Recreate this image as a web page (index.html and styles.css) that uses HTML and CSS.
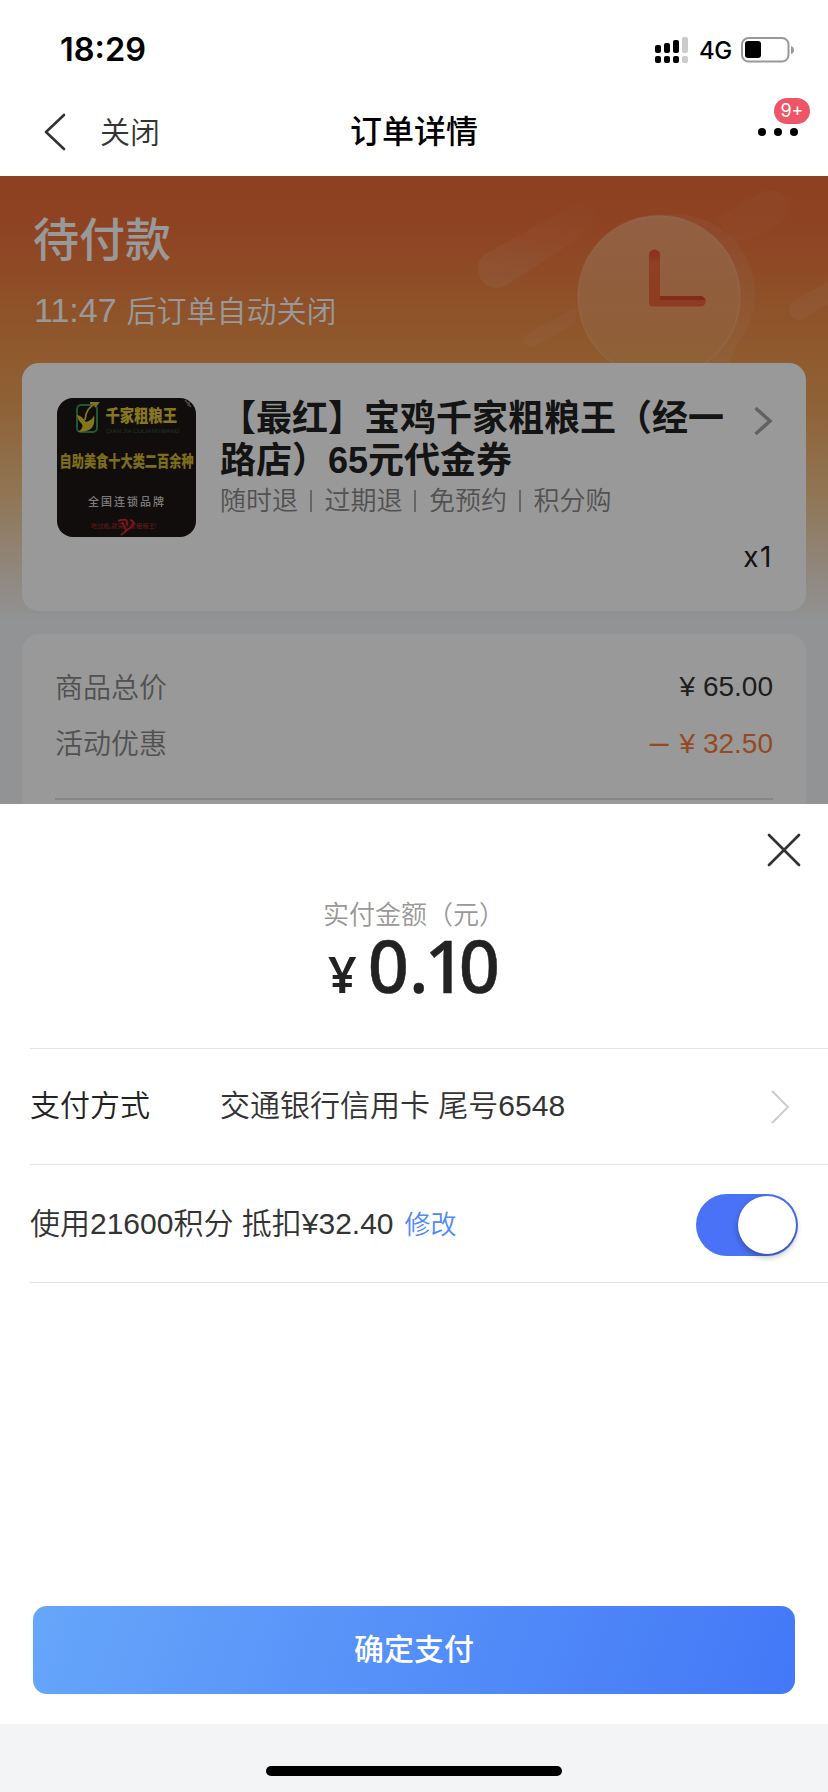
FILE: index.html
```html
<!DOCTYPE html>
<html lang="zh-CN">
<head>
<meta charset="utf-8">
<title>订单详情</title>
<link rel="stylesheet" href="styles.css">
</head>
<body>
<div class="screen">
  <header class="top">
    <div class="status">
      <span class="time">18:29</span>
      <div class="status-icons">
        <svg class="signal" width="34" height="27" viewBox="0 0 34 27">
          <g fill="#000"><rect x="0" y="8" width="6" height="8" rx="2"/><rect x="9" y="6" width="6" height="10" rx="2"/><rect x="18" y="3" width="6" height="13" rx="2"/><rect x="0" y="19" width="6" height="7" rx="2"/><rect x="9" y="19" width="6" height="7" rx="2"/><rect x="18" y="19" width="6" height="7" rx="2"/></g>
          <g fill="#ccc"><rect x="27" y="0" width="6" height="16" rx="2"/><rect x="27" y="19" width="6" height="7" rx="2"/></g>
        </svg>
        <span class="net">4G</span>
        <svg class="battery" width="54" height="26" viewBox="0 0 54 26">
          <rect x="1" y="1" width="46.500" height="23.500" rx="6.500" fill="none" stroke="#999" stroke-width="2"/>
          <rect x="4" y="4" width="16" height="17" rx="3" fill="#000"/>
          <path d="M50 9 Q53 10 53 13 T50 17 Z" fill="#999"/>
        </svg>
      </div>
    </div>
    <nav class="nav">
      <div class="nav-left">
        <svg width="22" height="38" viewBox="0 0 22 38"><path d="M20 2 2 19 20 36" fill="none" stroke="#333" stroke-width="2.600" stroke-linecap="round" stroke-linejoin="round"/></svg>
        <span class="nav-close">关闭</span>
      </div>
      <h1 class="nav-title">订单详情</h1>
      <div class="more">
        <i></i><i></i><i></i>
        <span class="badge">9+</span>
      </div>
    </nav>
  </header>

  <main class="order">
    <svg class="art" width="414" height="187" viewBox="0 0 414 187">
      <defs>
        <linearGradient id="disc" x1="0" y1="0" x2="0" y2="1"><stop offset="0" stop-color="#ffeccb" stop-opacity=".4"/><stop offset="1" stop-color="#ffeccb" stop-opacity=".08"/></linearGradient>
        <linearGradient id="streak" x1="0" y1="1" x2="1" y2="0"><stop offset="0" stop-color="#fff" stop-opacity=".11"/><stop offset="1" stop-color="#fff" stop-opacity="0"/></linearGradient>
        <linearGradient id="hand" x1="0" y1="0" x2="0" y2="1"><stop offset="0" stop-color="#e25030"/><stop offset=".25" stop-color="#ef6a3b"/><stop offset="1" stop-color="#ec6537"/></linearGradient>
      </defs>
      <path d="M71 78 178 19 186 49 91 110A19 19 0 0 1 71 78Z" fill="url(#streak)"/>
      <path d="M113 158 162 131V147L121 170A7 7 0 0 1 113 158Z" fill="#fff" fill-opacity=".06"/>
      <path d="M302 42 348 16A18 18 0 0 1 365 48L323 70Z" fill="#fff" fill-opacity=".035"/>
      <path d="M379 125 414 106V128L391 142A10 10 0 0 1 379 125Z" fill="#fff" fill-opacity=".08"/>
      <path d="M250 39A80 80 0 0 1 322 170L315 187H292A82 82 0 0 0 250 39Z" fill="#fff" fill-opacity=".07"/>
      <circle cx="245" cy="120.500" r="81" fill="url(#disc)" stroke="#ffe9c8" stroke-opacity=".16" stroke-width="2"/>
      <path d="M235 79a5.500 5.500 0 0 1 11 0V120H286.500a5.300 5.300 0 0 1 0 10.600H239a4 4 0 0 1-4-4Z" fill="url(#hand)"/>
      <path d="M246 120H287Q291 121 291 124H246Z" fill="#dc4a2b"/>
    </svg>
    <div class="state">待付款</div>
    <div class="countdown"><span class="clock">11:47</span><span>后订单自动关闭</span></div>

    <section class="card product">
      <svg class="thumb" width="139" height="139" viewBox="0 0 139 139">
        <rect width="139" height="139" fill="#1d1716"/>
        <rect x="20" y="7" width="20" height="27" rx="4" fill="none" stroke="#32945a" stroke-width="2"/>
        <path d="M20 17Q25 18 29 24 36 22 37 17 39 31 29 33 24 34 21 34 27 30 25 26 21 23 20 17Z" fill="#dcc52f"/>
        <path d="M28 22Q29 9 40 5M33 5 41 5 38 9" fill="none" stroke="#dcc52f" stroke-width="1.800"/>
        <text class="t-brand" transform="translate(48.500 24) scale(1 1.200)">千家粗粮王</text>
        <text class="t-latin" x="49" y="35">QIAN JIA CULIANGWANG</text>
        <text class="t-slogan" transform="translate(2.500 69) scale(1 1.350)">自助美食十大类二百余种</text>
        <text class="t-chain" x="31" y="108">全国连锁品牌</text>
        <text class="t-red" x="34" y="130">吃过瘾,就来千家粗粮王!</text>
        <path d="M61 123Q72 119 70 127M65 124 69 132M73 122Q80 124 74 129L64 137" fill="none" stroke="#c72930" stroke-width="2"/>
        <path d="M128 2 134 9M134 0 131 8" stroke="#777" stroke-width="1.500"/>
      </svg>
      <div class="info">
        <div class="head">
          <div class="name">【最红】宝鸡千家粗粮王（经一路店）65元代金券</div>
          <svg class="chev" width="20" height="32" viewBox="0 0 20 32"><path d="M2.500 3 17 16 2.500 29" fill="none" stroke="#a3a3a3" stroke-width="3.500"/></svg>
        </div>
        <div class="tags"><span>随时退</span><span>过期退</span><span>免预约</span><span>积分购</span></div>
        <div class="qty">x1</div>
      </div>
    </section>

    <section class="card prices">
      <div class="line"><span class="lab">商品总价</span><span class="val">¥ 65.00</span></div>
      <div class="line"><span class="lab">活动优惠</span><span class="val off"><b class="minus">–</b>¥ 32.50</span></div>
      <div class="rule"></div>
    </section>
    <div class="dim"></div>
  </main>

  <section class="sheet">
    <svg class="close" width="34" height="34" viewBox="0 0 34 34"><path d="M2 2 32 32M32 2 2 32" stroke="#333" stroke-width="2.700" stroke-linecap="round"/></svg>
    <div class="pay-label">实付金额（元）</div>
    <div class="amount"><span class="yen">¥</span><span class="num">0<span class="dot">.</span><span class="one">1</span>0</span></div>
    <div class="row method">
      <span class="row-label">支付方式</span>
      <span class="row-value">交通银行信用卡 尾号6548</span>
      <svg class="row-chev" width="20" height="36" viewBox="0 0 20 36"><path d="M2 2 18 18 2 34" fill="none" stroke="#ccc" stroke-width="2"/></svg>
    </div>
    <div class="row points">
      <span class="row-points">使用21600积分 抵扣¥32.40</span>
      <span class="edit">修改</span>
      <span class="toggle"><i></i></span>
    </div>
    <button class="pay">确定支付</button>
  </section>
  <footer class="home"><div class="bar"></div></footer>
</div>
</body>
</html>
```
FILE: styles.css
```css
* { box-sizing: border-box; }
body { margin: 0; background: #fff; font-family: "Liberation Sans", "Noto Sans CJK SC", sans-serif; font-weight: 350; color: #333; }
svg { display: block; flex: none; }
i { font-style: normal; }
.screen { width: 828px; height: 1792px; display: flex; flex-direction: column; overflow: hidden; }

.top { height: 176px; flex: none; }
.status { height: 88px; display: flex; justify-content: space-between; align-items: flex-start; padding: 30px 33px 0 60px; }
.time { font: 600 32.5px/40px Inter, sans-serif; color: #000; }
.status-icons { display: flex; align-items: flex-start; padding-top: 7px; }
.net { font: 500 24px/28px Inter, sans-serif; color: #000; width: 33px; margin: 0 9px 0 10px; letter-spacing: -.5px; }
.nav { height: 88px; display: grid; grid-template-columns: 1fr auto 1fr; align-items: center; padding: 0 30px 0 44px; }
.nav-left { display: flex; align-items: center; gap: 34px; }
.nav-close { font-size: 30px; line-height: 40px; padding-top: 2px; }
.nav-title { margin: 0 0 0 -14px; font-size: 32px; line-height: 40px; font-weight: 500; color: #000; }
.more { position: relative; justify-self: end; display: flex; gap: 8px; }
.more i { width: 8px; height: 8px; border-radius: 50%; background: #000; }
.badge { position: absolute; left: 16px; top: -30px; width: 36px; height: 26px; border-radius: 13px; background: #ee5566; color: #fff; font: 18px/26px Inter, sans-serif; text-align: center; }

.order { position: relative; height: 628px; flex: none; overflow: hidden; padding: 36px 22px 0; background: linear-gradient(#ed6c38 0, #ed7039 50px, #ef994f 187px, #efa35d 230px, #f0c58e 320px, #f0dfcd 390px, #f2f5f8 445px); }
.art { position: absolute; right: 0; top: 0; }
.dim { position: absolute; inset: 0; background: rgba(0, 0, 0, .4); }
.state { padding-left: 11px; font-size: 46px; line-height: 56px; font-weight: 500; color: #fff; }
.countdown { height: 60px; margin: 12px 0 23px; padding-left: 12px; display: flex; align-items: baseline; gap: 10px; font-size: 30px; line-height: 60px; color: #fff; }
.clock { font-size: 34px; }
.card { background: #fff; border-radius: 17px; }
.product { height: 248px; padding: 35px 33px 0 35px; display: flex; gap: 24px; }
.thumb { border-radius: 16px; }
.info { flex: 1; }
.head { display: flex; justify-content: space-between; }
.name { width: 506px; font-size: 36px; line-height: 42px; font-weight: 700; color: #222; }
.chev { margin-top: 7px; }
.tags { margin-top: 1px; display: flex; font-size: 26px; line-height: 36px; color: #888; }
.tags span { display: flex; align-items: center; }
.tags span + span::before { content: ""; width: 2px; height: 22px; margin: 0 13px 0 11.500px; background: #aaa; }
.qty { margin-top: 22px; text-align: right; font: 28px/32px Inter, sans-serif; letter-spacing: 1.5px; color: #222; }
.prices { margin-top: 23px; height: 248px; padding: 25px 33px 0; }
.line { height: 56px; display: flex; justify-content: space-between; align-items: center; font-size: 28px; color: #888; }
.lab { padding-bottom: 3px; }
.val { color: #333; white-space: pre; }
.off { color: #f77c37; }
.minus { font-weight: 400; font-size: 34px; line-height: 28px; margin-right: 11px; }
.rule { height: 2px; margin-top: 27px; background: #e0e0e0; }

.sheet { height: 920px; flex: none; background: #fff; display: flex; flex-direction: column; padding-top: 29px; }
.close { align-self: flex-end; margin-right: 27px; }
.pay-label { margin-top: 30px; text-align: center; font-size: 26px; line-height: 36px; color: #999; }
.amount { height: 120px; margin-top: -5px; display: flex; justify-content: center; align-items: baseline; gap: 11px; font-family: "Noto Sans", sans-serif; font-weight: 500; color: #222; line-height: 74px; }
.yen { font-size: 50px; font-weight: 600; }
.num { font-size: 72px; -webkit-text-stroke: .5px #222; }
.dot { letter-spacing: -4px; }
.one { letter-spacing: -7px; }
.row { margin-left: 30px; display: flex; align-items: center; border-top: 1px solid #e3e3e3; font-size: 30px; padding-right: 30px; }
.method { height: 116px; }
.row-label { width: 190px; color: #222; }
.row-label, .row-value { padding-bottom: 8px; }
.row-points { padding-bottom: 5px; }
.row-chev { margin-left: auto; margin-right: 8px; }
.points { height: 119px; border-bottom: 1px solid #e3e3e3; }
.edit { margin-left: 11px; padding-bottom: 2px; font-size: 26px; color: #4f88fa; }
.toggle { margin: 3px 0 0 auto; width: 102px; height: 62px; border-radius: 31px; background: #4a72f6; display: flex; justify-content: flex-end; padding: 2px; }
.toggle i { width: 58px; height: 58px; border-radius: 50%; background: #fff; box-shadow: 0 3px 6px rgba(0, 0, 0, .3); }
.pay { margin: auto 33px 30px; height: 88px; padding: 0 0 6px; border: 0; border-radius: 14px; background: linear-gradient(110deg, #66a6fa, #4378f7); color: #fff; font: 500 30px/44px "Noto Sans CJK SC", sans-serif; }
.home { flex: 1; background: #f3f4f6; padding-top: 42px; }
.bar { width: 296px; height: 10px; border-radius: 5px; background: #000; margin: 0 auto; }

.t-brand { font: 900 14.3px "Noto Sans CJK SC", sans-serif; fill: #e0c536; }
.t-latin { font: 6.2px "Liberation Sans", sans-serif; fill: #285a38; }
.t-slogan { font: 900 12.2px "Noto Sans CJK SC", sans-serif; fill: #cfb62e; }
.t-chain { font: 500 11px "Noto Sans CJK SC", sans-serif; letter-spacing: 2px; fill: #ccc; }
.t-red { font: 6.2px "Noto Sans CJK SC", sans-serif; fill: #b02a2e; }
```
